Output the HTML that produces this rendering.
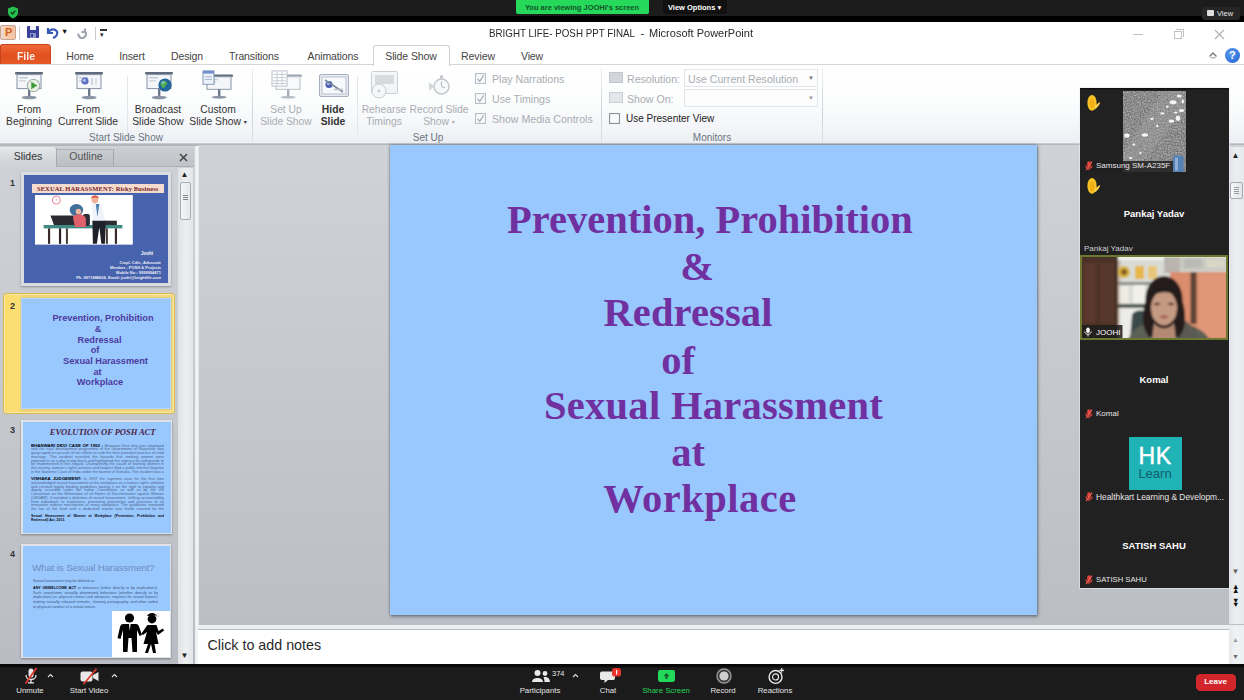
<!DOCTYPE html>
<html lang="en">
<head>
<meta charset="utf-8">
<title>Zoom - PowerPoint share</title>
<style>
*{box-sizing:border-box;margin:0;padding:0}
html,body{width:1244px;height:700px;overflow:hidden;background:#000}
body{position:relative;font-family:"Liberation Sans","DejaVu Sans",sans-serif;font-size:11px;color:#333}
.abs,.abs *{position:absolute}
#root{position:absolute;left:0;top:0;width:1244px;height:700px;overflow:hidden;background:#000}
#stage{left:0;top:0;width:1244px;height:700px;overflow:visible}
#root div,#root span,#root svg{position:absolute}
.t{white-space:nowrap;line-height:1}
.c{transform:translateX(-50%);text-align:center}
/* zoom top */
#ztop{left:0;top:0;width:1244px;height:16px;background:#1c1c1c}
#zgreen{left:516px;top:0;width:133px;height:14px;background:#26d95b;border-radius:0 0 2px 2px}
/* ppt */
#ppt{left:0;top:22px;width:1244px;height:642px;background:#fff}
#ribbon{left:0;top:44px;width:1244px;height:77px;background:linear-gradient(#fff,#fcfdfd 45%,#f3f5f8 80%,#eceff3)}
.tab{top:29px;font-size:10.5px;color:#444;letter-spacing:-.1px}
.rl{font-size:10.3px;color:#333;text-align:center;line-height:11.5px;white-space:nowrap;transform:translateX(-50%)}
.dis{color:#a9adb3}
.grp{font-size:10px;color:#6c7480;top:109px;transform:translateX(-50%);white-space:nowrap}
.sep{top:48px;width:1px;height:70px;background:#d9dde2}
/* left panel */
#left{left:0;top:124px;width:194.500px;height:518px;background:linear-gradient(#cfd2d6,#c6c9cd 45%,#b9bdc3)}
/* edit area */
#edit{left:198px;top:123px;width:1046px;height:480px;background:linear-gradient(#cfd3d7,#c6cace 45%,#bbbfc5)}
#slide{left:390px;top:123px;width:647px;height:470px;background:#99c8fe;box-shadow:0 0 2.500px rgba(70,75,88,.75),1px 2px 3px rgba(60,70,80,.45)}
.st{font-family:"Liberation Serif","DejaVu Serif",serif;font-weight:bold;color:#70309f;font-size:40.5px;white-space:nowrap;line-height:1;transform:translateX(-50%)}
#notes{left:198px;top:603px;width:1046px;height:39px;background:#fff;border-top:4px solid #eceef1;box-shadow:inset 0 1px 0 #b9bdc3}
/* zoom panel */
#zp{left:1080px;top:88px;width:149px;height:500px;background:#212121;box-shadow:0 0 0 1px rgba(235,238,242,.55),inset 0 1.500px 0 #101010}
.zn{color:#e6e6e6;font-size:8px;white-space:nowrap;line-height:1}
.zb{color:#fff;font-weight:bold;font-size:9.500px;white-space:nowrap;line-height:1;transform:translateX(-50%)}
/* bottom */
#zbot{left:0;top:664px;width:1244px;height:36px;background:#1b1b1b}
.bl{color:#e4e4e4;font-size:7.800px;white-space:nowrap;line-height:1;transform:translateX(-50%);top:22.500px}
</style>
</head>
<body>
<div id="root"><div id="stage">
<!-- ZOOM TOP -->
<div id="ztop"></div>
<div id="zgreen"><span class="t c" style="left:66px;top:3.700px;font-size:7.500px;font-weight:bold;color:#14532a">You are viewing JOOHI's screen</span></div>
<div style="left:663px;top:0;width:64px;height:14px;background:#111;border-radius:0 0 3px 3px"></div><span class="t" style="left:668px;top:3.700px;font-size:7.500px;font-weight:bold;color:#fff">View Options ▾</span>
<div style="left:1202px;top:7px;width:38px;height:13px;background:#262626;border-radius:3px"></div><span class="t" style="left:1217px;top:9.500px;font-size:7.500px;color:#e6e6e6">View</span>
<div style="left:1207px;top:10px;width:7px;height:6px;background:#ddd;border-radius:1px"></div>
<svg style="left:7px;top:6px" width="12" height="13" viewBox="0 0 12 13"><path d="M6 .5 L11 2.5 V6.5 C11 9.5 8.5 11.5 6 12.5 C3.5 11.5 1 9.5 1 6.5 V2.5Z" fill="#25c04f"/><path d="M3.8 6.3 L5.4 8 L8.3 4.8" stroke="#0d3b1a" stroke-width="1.3" fill="none"/></svg>

<!-- POWERPOINT WINDOW -->
<div id="ppt">
  <!-- title bar -->
  <span class="t" style="left:488.700px;top:5.500px;font-size:11.500px;color:#2a2a2a;transform-origin:0 50%;transform:scaleX(.8516)">BRIGHT LIFE- POSH PPT FINAL</span><span class="t" style="left:640.500px;top:5.500px;font-size:11.500px;color:#2a2a2a">-</span><span class="t" style="left:649.400px;top:5.500px;font-size:11.500px;color:#2a2a2a;transform-origin:0 50%;transform:scaleX(.9566)">Microsoft PowerPoint</span>
  <!-- QAT -->
  <div id="qat" style="left:0;top:0;width:120px;height:22px">
    <div style="left:0;top:3px;width:15.500px;height:15px;background:linear-gradient(90deg,#e9d9d2,#f8cdb0 35%,#f6c3a0);border:1px solid #c9a392;border-radius:2px"><span class="t" style="left:4px;top:1px;font-size:11px;font-weight:bold;color:#d2601c">P</span></div>
    <div style="left:19px;top:4px;width:1px;height:14px;background:#c8ccd2"></div>
    <div style="left:26.500px;top:3.700px;width:12.500px;height:12.300px;background:#3a3f9c;border-radius:1px"><div style="left:3px;top:0;width:6.500px;height:4.500px;background:#eef0f8"></div><div style="left:3px;top:7.500px;width:6.500px;height:4.800px;background:#8c92cc"></div><div style="left:4px;top:8.500px;width:2px;height:3px;background:#3a3f9c"></div></div>
    <svg style="left:46px;top:4px" width="14" height="14" viewBox="0 0 14 14"><path d="M2 2 V7 H7 M2.5 6.5 C4 3 9 2 11 5.5 C12 8 10.5 11 7 12" stroke="#3a58b8" stroke-width="2.2" fill="none"/></svg>
    <span class="t" style="left:62.500px;top:4.500px;font-size:8.500px;color:#111">▾</span>
    <svg style="left:76px;top:5px" width="13" height="13" viewBox="0 0 13 13"><path d="M9 1.5 V5 H5.5 M9 4.5 C10.5 6 10.5 9.5 7.5 10.8 C4.5 11.8 2 9.5 2.3 6.5" stroke="#9da2ad" stroke-width="2.100" fill="none"/></svg>
    <div style="left:95px;top:5px;width:1px;height:13px;background:#c8ccd2"></div>
    <div style="left:100px;top:7px;width:7px;height:1.5px;background:#333"></div>
    <span class="t" style="left:100px;top:9px;font-size:7px;color:#222">▾</span>
  </div>
  <!-- window controls -->
  <div style="left:1133px;top:12px;width:10px;height:1px;background:#c4c4c4"></div>
  <div style="left:1174px;top:9px;width:8px;height:8px;border:1px solid #c2c2c2"></div>
  <div style="left:1176px;top:7px;width:8px;height:8px;border-top:1px solid #c2c2c2;border-right:1px solid #c2c2c2"></div>
  <svg style="left:1214px;top:7px" width="11" height="11" viewBox="0 0 11 11"><path d="M1 1 L10 10 M10 1 L1 10" stroke="#b0b0b0" stroke-width="1.1"/></svg>
  <svg style="left:1208px;top:28px" width="10" height="10" viewBox="0 0 10 10"><path d="M1.5 6.5 L5 3 L8.5 6.5" stroke="#777" stroke-width="1.3" fill="none"/><path d="M2.5 7.8 H7.5" stroke="#999" stroke-width="1"/></svg>
  <div style="left:1225px;top:26px;width:15px;height:15px;border-radius:50%;background:radial-gradient(circle at 40% 35%,#5b9cf0,#1f5fd0)"><span class="t" style="left:4px;top:2px;font-size:11px;font-weight:bold;color:#fff">?</span></div>

  <!-- tabs -->
  <div style="left:0;top:22px;width:51px;height:21px;background:linear-gradient(#f0693a,#e1501f 55%,#e65a26);border-radius:2px 3px 0 0;border:1px solid #c8441a"><span class="t c" style="left:25px;top:5.800px;font-size:10.500px;color:#fff;font-weight:bold;opacity:.9">File</span></div>
  <span class="t tab c" style="left:80px">Home</span>
  <span class="t tab c" style="left:132px">Insert</span>
  <span class="t tab c" style="left:187px">Design</span>
  <span class="t tab c" style="left:254px">Transitions</span>
  <span class="t tab c" style="left:333px">Animations</span>
  <div style="left:373px;top:23px;width:77px;height:21px;border:1px solid #cdd1d6;border-bottom:none;border-radius:3px 3px 0 0;background:#fff;z-index:3"></div>
  <span class="t tab c" style="left:411px;z-index:4">Slide Show</span>
  <span class="t tab c" style="left:478px">Review</span>
  <span class="t tab c" style="left:532px">View</span>
  <div style="left:0;top:42.300px;width:1244px;height:1px;background:#d3d6da"></div>

  <!-- ribbon -->
  <div id="ribbon">
<svg style="left:14px;top:6px;opacity:1" width="30" height="28" viewBox="0 0 30 28">
<rect x="1" y="0" width="28" height="2.6" rx="1" fill="#5d6b7d"/>
<rect x="3" y="2.6" width="24" height="14" fill="#f4f6f9" stroke="#8492a4" stroke-width="1"/>
<rect x="5" y="5" width="9" height="1.5" fill="#c3cbd6"/><rect x="5" y="8" width="7" height="1.5" fill="#d3d9e2"/>
<rect x="14" y="16.6" width="2.4" height="8" fill="#6b7889"/>
<ellipse cx="15.2" cy="25.5" rx="7.5" ry="1.7" fill="#8a96a6"/>
<circle cx="19.5" cy="13.5" r="6.2" fill="#e6efe2" stroke="#9aa9a0" stroke-width="1"/><path d="M17.3 9.8 L23.2 13.5 L17.3 17.2Z" fill="#3e9a36"/></svg>
<svg style="left:74px;top:6px;opacity:1" width="30" height="28" viewBox="0 0 30 28">
<rect x="1" y="0" width="28" height="2.6" rx="1" fill="#5d6b7d"/>
<rect x="3" y="2.6" width="24" height="14" fill="#f4f6f9" stroke="#8492a4" stroke-width="1"/>
<rect x="5" y="5" width="9" height="1.5" fill="#c3cbd6"/><rect x="5" y="8" width="7" height="1.5" fill="#d3d9e2"/>
<rect x="14" y="16.6" width="2.4" height="8" fill="#6b7889"/>
<ellipse cx="15.2" cy="25.5" rx="7.5" ry="1.7" fill="#8a96a6"/>
<circle cx="11" cy="9" r="3.6" fill="#5b6fc4"/><circle cx="10.3" cy="8.3" r="1.5" fill="#b9c4ee"/><rect x="17" y="6" width="2" height="7" fill="#cfd6e0"/><rect x="21" y="6" width="2" height="7" fill="#dde2ea"/></svg>
<svg style="left:144px;top:6px;opacity:1" width="30" height="28" viewBox="0 0 30 28">
<rect x="1" y="0" width="28" height="2.6" rx="1" fill="#5d6b7d"/>
<rect x="3" y="2.6" width="24" height="14" fill="#f4f6f9" stroke="#8492a4" stroke-width="1"/>
<rect x="5" y="5" width="9" height="1.5" fill="#c3cbd6"/><rect x="5" y="8" width="7" height="1.5" fill="#d3d9e2"/>
<rect x="14" y="16.6" width="2.4" height="8" fill="#6b7889"/>
<ellipse cx="15.2" cy="25.5" rx="7.5" ry="1.7" fill="#8a96a6"/>
<circle cx="21" cy="13" r="6.600" fill="#22649c"/><path d="M17 10 C19 8 22 8.5 23 10.5 C24 12.5 22 13 21 15 C20 17 18.5 16 17.5 14.5 C16.5 13 16 11.5 17 10Z" fill="#4fae55"/><circle cx="19" cy="10.5" r="1.6" fill="#9cc6f2" opacity=".7"/></svg>
<svg style="left:202px;top:4px;opacity:1" width="32" height="29.500" preserveAspectRatio="none"  viewBox="-2 -5 32 33" >
<rect x="1" y="0" width="28" height="2.6" rx="1" fill="#5d6b7d"/>
<rect x="3" y="2.6" width="24" height="14" fill="#f4f6f9" stroke="#8492a4" stroke-width="1"/>
<rect x="5" y="5" width="9" height="1.5" fill="#c3cbd6"/><rect x="5" y="8" width="7" height="1.5" fill="#d3d9e2"/>
<rect x="14" y="16.6" width="2.4" height="8" fill="#6b7889"/>
<ellipse cx="15.2" cy="25.5" rx="7.5" ry="1.7" fill="#8a96a6"/>
<rect x="-1" y="-4" width="11" height="15" fill="#eef2f8" stroke="#7f93b3" stroke-width="1"/><rect x="-1" y="-4" width="11" height="3" fill="#6f8fcf"/><rect x="1" y="2" width="7" height="1.2" fill="#a8b6cf"/><rect x="1" y="5" width="7" height="1.2" fill="#a8b6cf"/></svg>
<svg style="left:271px;top:4px;opacity:.6" width="32" height="29.500" preserveAspectRatio="none"  viewBox="-2 -5 32 33" >
<rect x="1" y="0" width="28" height="2.6" rx="1" fill="#5d6b7d"/>
<rect x="3" y="2.6" width="24" height="14" fill="#f4f6f9" stroke="#8492a4" stroke-width="1"/>
<rect x="5" y="5" width="9" height="1.5" fill="#c3cbd6"/><rect x="5" y="8" width="7" height="1.5" fill="#d3d9e2"/>
<rect x="14" y="16.6" width="2.4" height="8" fill="#6b7889"/>
<ellipse cx="15.2" cy="25.5" rx="7.5" ry="1.7" fill="#8a96a6"/>
<rect x="-1" y="-4" width="15" height="17" fill="#fff" stroke="#8791a3" stroke-width="1"/><path d="M0 0 H13 M0 3.500 H13 M0 7 H13 M0 10 H13 M4 -3 V12 M9 -3 V12" stroke="#8c95a6" stroke-width=".8"/></svg>
<svg style="left:319px;top:8px" width="30" height="24" viewBox="0 0 30 24">
<rect x=".5" y=".5" width="29" height="22" rx="1.500" fill="#e8ecf2" stroke="#a7b0be"/>
<rect x="3" y="3" width="24" height="17" fill="#f7f9fc" stroke="#aab4c3" stroke-width=".8"/>
<circle cx="10" cy="10.5" r="3.6" fill="#4a5fb5"/><circle cx="9.3" cy="9.8" r="1.4" fill="#b5c0ec"/>
<path d="M6 6 L24 18" stroke="#7c8aa0" stroke-width="1.6"/><path d="M15 15.5 H24" stroke="#b4bdca" stroke-width="1.5"/>
</svg>
<svg style="left:370px;top:5px;opacity:.55" width="30" height="30" viewBox="0 0 30 30">
<rect x="1.5" y=".5" width="26" height="22" rx="1" fill="#eceef1" stroke="#a3a9b2"/>
<rect x="5" y="4" width="19" height="9" fill="#b9bec6"/>
<circle cx="9" cy="20" r="7" fill="#f1f2f4" stroke="#9ea4ad"/><circle cx="9" cy="20" r="1.3" fill="#8e949d"/>
</svg>
<svg style="left:427px;top:7px;opacity:.6" width="26" height="26" viewBox="0 0 26 26">
<circle cx="14.5" cy="13.5" r="7.5" fill="#f6f7f8" stroke="#9aa0a9" stroke-width="1.4"/>
<path d="M14.5 13.5 V8.5 M14.5 13.5 L18 15" stroke="#8d939c" stroke-width="1.2"/>
<rect x="13" y="2.5" width="3" height="3" fill="#9aa0a9"/>
<path d="M2 9.5 L8 13.5 L2 17.5Z" fill="#b9bec6"/>
</svg>
<span class="rl " style="left:29px;top:38px;">From</span><span class="rl " style="left:29px;top:49.5px;">Beginning</span>
<span class="rl " style="left:88px;top:38px;">From</span><span class="rl " style="left:88px;top:49.5px;">Current Slide</span>
<span class="rl " style="left:158px;top:38px;">Broadcast</span><span class="rl " style="left:158px;top:49.5px;">Slide Show</span>
<span class="rl " style="left:218px;top:38px;">Custom</span><span class="rl " style="left:218px;top:49.5px;">Slide Show <span style="position:static;font-size:6px;vertical-align:1px">▾</span></span>
<span class="rl dis" style="left:286px;top:38px;">Set Up</span><span class="rl dis" style="left:286px;top:49.5px;">Slide Show</span>
<span class="rl " style="left:333px;top:38px;font-weight:bold;">Hide</span><span class="rl " style="left:333px;top:49.5px;font-weight:bold;">Slide</span>
<span class="rl dis" style="left:384px;top:38px;">Rehearse</span><span class="rl dis" style="left:384px;top:49.5px;">Timings</span>
<span class="rl dis" style="left:439px;top:38px;">Record Slide</span><span class="rl dis" style="left:439px;top:49.5px;">Show <span style="position:static;font-size:6px;vertical-align:1px">▾</span></span>
<div class="sep" style="left:127px;top:10px;height:58px;background:#e3e6ea"></div>
<div class="sep" style="left:357px;top:10px;height:58px;background:#e3e6ea"></div>
<div class="sep" style="left:252px;top:2px;height:74px;background:linear-gradient(#eceff2,#cdd2d9 60%,#dfe3e8)"></div>
<div class="sep" style="left:601px;top:2px;height:74px;background:linear-gradient(#eceff2,#cdd2d9 60%,#dfe3e8)"></div>
<div class="sep" style="left:822px;top:2px;height:74px;background:linear-gradient(#eceff2,#cdd2d9 60%,#dfe3e8)"></div>
<span class="grp" style="left:126px;top:66px">Start Slide Show</span>
<span class="grp" style="left:428px;top:66px">Set Up</span>
<span class="grp" style="left:712px;top:66px">Monitors</span>
<svg style="left:475px;top:7px" width="11" height="11" viewBox="0 0 10 10"><rect x=".5" y=".5" width="9" height="9" fill="#fafbfc" stroke="#b9bec6"/><path d="M2.3 5.2 L4.3 7.6 L7.8 2.2" stroke="#aab0b9" stroke-width="1.2" fill="none"/></svg>
<span class="t dis" style="left:492px;top:7.5px;font-size:10.6px">Play Narrations</span>
<svg style="left:475px;top:27px" width="11" height="11" viewBox="0 0 10 10"><rect x=".5" y=".5" width="9" height="9" fill="#fafbfc" stroke="#b9bec6"/><path d="M2.3 5.2 L4.3 7.6 L7.8 2.2" stroke="#aab0b9" stroke-width="1.2" fill="none"/></svg>
<span class="t dis" style="left:492px;top:27.5px;font-size:10.6px">Use Timings</span>
<svg style="left:475px;top:47px" width="11" height="11" viewBox="0 0 10 10"><rect x=".5" y=".5" width="9" height="9" fill="#fafbfc" stroke="#b9bec6"/><path d="M2.3 5.2 L4.3 7.6 L7.8 2.2" stroke="#aab0b9" stroke-width="1.2" fill="none"/></svg>
<span class="t dis" style="left:492px;top:47.5px;font-size:10.6px">Show Media Controls</span>
<div style="left:609px;top:6px;width:14px;height:11px;background:#c9cdd3;border:1px solid #b4b9c1;opacity:.8"></div>
<div style="left:609px;top:26px;width:14px;height:11px;background:#dfe2e6;border:1px solid #bcc1c8;opacity:.8"></div>
<span class="t dis" style="left:627px;top:7.5px;font-size:10.6px">Resolution:</span>
<span class="t dis" style="left:627px;top:27.5px;font-size:10.6px">Show On:</span>
<div style="left:684px;top:3px;width:134px;height:18px;border:1px solid #e3e6ea;background:#fdfdfe"></div>
<div style="left:684px;top:23px;width:134px;height:18px;border:1px solid #e3e6ea;background:#fdfdfe"></div>
<span class="t dis" style="left:688px;top:7.5px;font-size:10.6px">Use Current Resolution</span>
<span class="t" style="left:808px;top:9px;font-size:6px;color:#777">▼</span>
<span class="t" style="left:808px;top:29px;font-size:6px;color:#999">▼</span>
<svg style="left:609px;top:47px" width="11" height="11" viewBox="0 0 10 10"><rect x=".5" y=".5" width="9" height="9" fill="#fafbfc" stroke="#8a919c"/></svg>
<span class="t" style="left:626px;top:47.5px;font-size:10px;color:#222">Use Presenter View</span>
  </div>
  <div style="left:0;top:120.5px;width:1244px;height:4.5px;background:linear-gradient(#d4d7db,#b4b8bd 30%,#b1b5ba)"></div>

  <!-- LEFT PANEL -->
  <div id="left">
<div style="left:0;top:2px;width:194px;height:19px;background:linear-gradient(#cbced2,#bfc2c7);border-bottom:1px solid #aeb2b8"></div>
<div style="left:0;top:1px;width:57px;height:20px;background:linear-gradient(#e6e8ea,#d3d6da 70%,#cfd2d6);border-right:1px solid #a6abb2;border-radius:0 3px 0 0"></div>
<div style="left:57px;top:3px;width:57px;height:17px;background:linear-gradient(#c9ccd0,#bbbec3);border-right:1px solid #a3a7ae;border-top:1px solid #b0b4ba"></div>
<span class="t c" style="left:28px;top:5px;font-size:10.5px;color:#333">Slides</span>
<span class="t c" style="left:86px;top:5px;font-size:10.5px;color:#555">Outline</span>
<svg style="left:179px;top:7px" width="9" height="9" viewBox="0 0 9 9"><path d="M1 1 L8 8 M8 1 L1 8" stroke="#444" stroke-width="1.5"/></svg>
<div style="left:178px;top:22px;width:15px;height:496px;background:linear-gradient(90deg,#dfe1e4,#eceef0 50%,#e2e4e7)"></div>
<span class="t" style="left:180.500px;top:24.5px;font-size:8px;color:#222">▲</span>
<span class="t" style="left:180.500px;top:506px;font-size:8px;color:#222">▼</span>
<div style="left:180px;top:36px;width:11px;height:38px;background:linear-gradient(90deg,#f4f5f6,#e4e6e9);border:1px solid #a9aeb5;border-radius:2px"><div style="left:2px;top:12px;width:5px;height:1px;background:#888;box-shadow:0 2px 0 #888,0 4px 0 #888"></div></div>
<span class="t" style="left:10px;top:33px;font-size:9px;font-weight:bold;color:#333;z-index:5">1</span>
<span class="t" style="left:10px;top:156px;font-size:9px;font-weight:bold;color:#333;z-index:5">2</span>
<span class="t" style="left:10px;top:280px;font-size:9px;font-weight:bold;color:#333;z-index:5">3</span>
<span class="t" style="left:10px;top:404px;font-size:9px;font-weight:bold;color:#333;z-index:5">4</span>
<div style="left:20.500px;top:26.30000000000001px;width:150.500px;height:113.500px;background:#d9dce1;box-shadow:0 1px 2px rgba(0,0,0,.3)">
<div style="left:3.300px;top:2.500px;width:144px;height:108.500px;background:#4863ad"></div>
<div style="left:11.200px;top:11.600px;width:132px;height:9.600px;background:#f3dccf"><span class="t c" style="left:66px;top:1.800px;font-family:'Liberation Serif',serif;font-weight:bold;font-size:6.500px;color:#7a1f1f;letter-spacing:.1px">SEXUAL HARASSMENT: Risky Business</span></div>
<svg style="left:14.900px;top:22.700px" width="97.800" height="49.700" viewBox="0 0 98 49.700">
<rect width="98" height="49.700" fill="#fff"/>
<circle cx="21.400" cy="5.100" r="4" fill="none" stroke="#e0667a" stroke-width=".8"/>
<path d="M21.400 3 V5.100 H23" stroke="#e08a96" stroke-width=".5" fill="none"/>
<rect x="8.600" y="30" width="79" height="3.400" fill="#3f8a82"/>
<rect x="13" y="33.400" width="2.200" height="15.500" fill="#3a2a2a"/><rect x="24" y="33.400" width="2.200" height="15.500" fill="#2a2226"/><rect x="31" y="33.400" width="2" height="15.500" fill="#4a3a34"/><rect x="71" y="33.400" width="2" height="15.500" fill="#4a3a34"/><rect x="80" y="33.400" width="2.200" height="15.500" fill="#3a2a2a"/>
<path d="M15.500 20.600 H39 L41.500 30 H19Z" fill="#2a2a30"/>
<rect x="48" y="19" width="7" height="12" rx="2" fill="#2e2e36"/>
<ellipse cx="41.500" cy="15" rx="6.800" ry="6" fill="#3f6f9a"/>
<path d="M38 22 C40 18 50 18 51 24 V32 H40Z" fill="#e0606c"/><circle cx="43.500" cy="16.500" r="2.800" fill="#f1b9a0"/>
<ellipse cx="60" cy="4.500" rx="3.400" ry="4" fill="#f1b098"/><path d="M56 3.500 C57 -.5 63.500 -.5 64 3.500 C62 2 58 2 56 3.500Z" fill="#d8503e"/>
<path d="M57 9 H67 L70 26 H58Z" fill="#f0f3f9"/><path d="M61 9 L62.500 22 L64.500 9Z" fill="#4b7fb0"/>
<path d="M57.500 25.700 H71 L70 48.900 H66.500 L64.500 32 L62 48.900 H58Z" fill="#20202a"/>
<rect x="70" y="25.700" width="12" height="4.300" fill="#2c2c33"/>
</svg>
<span class="t" style="right:18px;top:80px;font-size:4.500px;font-weight:bold;color:#fff">Joohi</span>
<span class="t" style="right:10px;top:88.300px;font-size:4px;font-weight:bold;color:#e8ecf8">Cmpl. Cdtr., Advocate</span>
<span class="t" style="right:10px;top:94px;font-size:4px;font-weight:bold;color:#e8ecf8">Member - POSH &amp; Projects</span>
<span class="t" style="right:10px;top:98.700px;font-size:4px;font-weight:bold;color:#e8ecf8">Mobile No.: 9999994471</span>
<span class="t" style="right:10px;top:103.900px;font-size:4px;font-weight:bold;color:#e8ecf8">Ph. 9971888624, Email: joohi@brightlife.com</span>
</div>
<div style="left:2.600px;top:146.89999999999998px;width:172.400px;height:121.200px;border-radius:3px;background:linear-gradient(90deg,#fbdc6c,#fbdf76 9%,#efd675 11%,#f1da80);border:1.300px solid #d9b84e;box-shadow:inset 0 0 0 1px #f7e7a8">
<div style="left:17.500px;top:4.400px;width:149.500px;height:110.500px;background:#99c8fe;box-shadow:0 0 0 1px #e3cd7c,inset 0 0 0 1px rgba(200,225,255,.6)"></div>
</div>
<span class="t c" style="left:103px;top:168.2px;font-size:9.2px;font-weight:bold;color:#4d3aa0">Prevention, Prohibition</span>
<span class="t c" style="left:98px;top:178.89999999999998px;font-size:9.2px;font-weight:bold;color:#4d3aa0">&amp;</span>
<span class="t c" style="left:99.5px;top:189.5px;font-size:9.2px;font-weight:bold;color:#4d3aa0">Redressal</span>
<span class="t c" style="left:95px;top:200.2px;font-size:9.2px;font-weight:bold;color:#4d3aa0">of</span>
<span class="t c" style="left:105.5px;top:210.8px;font-size:9.2px;font-weight:bold;color:#4d3aa0">Sexual Harassment</span>
<span class="t c" style="left:97.5px;top:221.5px;font-size:9.2px;font-weight:bold;color:#4d3aa0">at</span>
<span class="t c" style="left:100px;top:232.10000000000002px;font-size:9.2px;font-weight:bold;color:#4d3aa0">Workplace</span>
<div style="left:21px;top:274px;width:151px;height:114px;background:#dfe3e8;box-shadow:0 1px 2px rgba(0,0,0,.35)">
<div style="left:1.5px;top:1.5px;width:148px;height:111px;background:#99c8fe"></div>
<span class="t c" style="left:81.600px;top:8px;font-family:'Liberation Serif',serif;font-weight:bold;font-style:italic;font-size:8.600px;color:#4d2348;letter-spacing:-.1px">EVOLUTION OF POSH ACT</span>
<div style="left:10px;top:22.500px;width:133px;height:30.400px;padding-top:1px;font-size:3.800px;line-height:3.750px;color:#4d6186;text-align:justify;overflow:hidden"><b style="color:#000;font-size:4.400px">BHANWARI DEVI CASE OF 1992 :</b> Bhanwari Devi who was employed with the rural development programme of the Government of Rajasthan was gang raped on account of her efforts to curb the then prevalent practice of child marriage. This incident revealed the hazards that working women were exposed to on a day to day basis and highlighted the urgency for safeguards to be implemented in this regard. Championing the cause of working women in the country, women's rights activists and lawyers filed a public interest litigation in the Supreme Court of India under the banner of Vishaka. This incident was a landmark for the women's movement in India and formed the basis of the later guidelines.</div>
<div style="left:10px;top:56px;width:133px;height:34.100px;padding-top:1px;font-size:3.800px;line-height:3.750px;color:#4d6186;text-align:justify;overflow:hidden"><b style="color:#000;font-size:4.400px">VISHAKA JUDGEMENT:</b> In 1997 the supreme court for the first time acknowledged sexual harassment at the workplace as a human rights violation and created legally binding guidelines basing it on the right to equality and dignity accorded under the Indian Constitution as well as by the UN Convention on the Elimination of all Forms of Discrimination against Women (CEDAW). It included a definition of sexual harassment, shifting accountability from individuals to institutions, prioritizing prevention and provision of an innovative redress mechanism at every workplace. The guidelines remained the law of the land until a dedicated statute was finally enacted by the Parliament in 2013 to replace them.</div>
<div style="left:10px;top:94px;width:133px;height:9px;font-size:3.4px;line-height:4.2px;color:#0a0a14;font-weight:bold;text-align:justify;overflow:hidden">Sexual Harassment of Women at Workplace (Prevention, Prohibition and Redressal) Act, 2013.</div>
</div>
<div style="left:21px;top:398px;width:150px;height:114px;background:#dfe3e8;box-shadow:0 1px 2px rgba(0,0,0,.35)">
<div style="left:1.5px;top:1.5px;width:147px;height:111px;background:#99c8fe"></div>
<span class="t" style="left:11px;top:19px;font-size:9.800px;color:#6f8cc0;letter-spacing:-.15px">What is Sexual Harassment?</span>
<span class="t" style="left:12px;top:35.5px;font-size:3.6px;color:#3d5580">Sexual harassment may be defined as: -</span>
<div style="left:12px;top:42px;width:125px;height:24px;font-size:3.7px;line-height:4.7px;color:#3d5580;text-align:justify;overflow:hidden"><b style="color:#0a0a14">ANY UNWELCOME ACT</b> or behaviour (either directly or by implications): Such unwelcome sexually determined behaviour (whether directly or by implication) as: physical contact and advances; requests for sexual favours; making sexually coloured remarks; showing pornography; and other verbal or physical conduct of a sexual nature.</div>
<svg style="left:90.5px;top:67px" width="58" height="46" viewBox="0 0 58 46">
<rect width="58" height="46" fill="#fff"/>
<circle cx="17.5" cy="7" r="4.6" fill="#000"/>
<path d="M11 13 H24 C26 13 27 15 27.5 17 L30 24 L27.5 25 L25 19 V41 H20.5 L19.5 27 H16.5 L15.500 41 H11 V19 L8.500 28 L5.500 27 L8 16 C8.500 14 9.500 13 11 13Z" fill="#000"/>
<path d="M17 13 L17.800 20 L18.600 13Z" fill="#fff"/>
<circle cx="40" cy="8" r="4.400" fill="#000"/><path d="M35 5 C37 1 44 1 45.500 6 L44 4.500Z" fill="#000"/>
<circle cx="45.500" cy="4.500" r="1.700" fill="none" stroke="#bbb" stroke-width=".5"/>
<path d="M35.500 14 H44.500 L46.500 20 L51 17.500 L52 19.500 L46 24 L44 21 L46.500 33 H42.500 L44 42 H41 L39 33 L36 42 H33 L36 33 H31.500 L35 21 L31 24 L29.500 22.500 L34 16Z" fill="#000"/>
</svg>
</div>
</div>

  <!-- EDIT AREA -->
  <div id="edit"></div>
  <div style="left:195px;top:124px;width:4px;height:518px;background:linear-gradient(90deg,#e8eaed,#f6f7f8,#dfe2e6)"></div>
  <div id="slide">
    <span class="st" style="left:320px;top:55px">Prevention, Prohibition</span>
    <span class="st" style="left:307px;top:102px">&amp;</span>
    <span class="st" style="left:298px;top:148px;letter-spacing:.12px">Redressal</span>
    <span class="st" style="left:288px;top:195.5px">of</span>
    <span class="st" style="left:323.5px;top:241px;letter-spacing:.3px">Sexual Harassment</span>
    <span class="st" style="left:298px;top:288px">at</span>
    <span class="st" style="left:310px;top:334px;letter-spacing:.5px">Workplace</span>
  </div>

  <!-- right scrollbars -->
  <div style="left:1229px;top:125px;width:15px;height:477px;background:linear-gradient(90deg,#dfe2e6,#eceef1 45%,#e6e8ec)"></div>
  <span class="t" style="left:1231.500px;top:129.500px;font-size:8px;color:#222">▲</span>
  <div style="left:1230px;top:160px;width:12.500px;height:17px;background:linear-gradient(90deg,#f6f7f8,#e2e5e9);border:1px solid #a4a9b1;border-radius:2px"><div style="left:3px;top:4px;width:5px;height:1px;background:#9a9fa7;box-shadow:0 2px 0 #9a9fa7,0 4px 0 #9a9fa7,0 6px 0 #9a9fa7"></div></div>
  <span class="t" style="left:1231.500px;top:546px;font-size:8px;color:#666">▼</span>
  <span class="t" style="left:1232px;top:560.500px;font-size:7.500px;color:#111">▲</span><span class="t" style="left:1232px;top:565px;font-size:7.500px;color:#111">▲</span>
  <span class="t" style="left:1232px;top:574.500px;font-size:7.500px;color:#111">▼</span><span class="t" style="left:1232px;top:579px;font-size:7.500px;color:#111">▼</span>
  <div style="left:1229px;top:606px;width:15px;height:36px;background:linear-gradient(90deg,#e6e8ec,#f1f2f4 45%,#eceef0);z-index:2"></div>
  <span class="t" style="left:1232px;top:613.500px;font-size:7px;color:#9a9fa7;z-index:3">▲</span>
  <span class="t" style="left:1232px;top:631px;font-size:7px;color:#666b73;z-index:3">▼</span>
  <div id="notes"><span class="t" style="left:9.5px;top:9px;font-size:14.300px;color:#2a2a2a">Click to add notes</span></div>
</div>

<!-- ZOOM PARTICIPANT PANEL -->
<div id="zp">
<svg style="left:5.7999999999999545px;top:5.5px" width="15" height="18.500" viewBox="0 0 14 17"><ellipse cx="5.600" cy="8.200" rx="4.300" ry="7.400" fill="#f6c226"/><ellipse cx="5.600" cy="8.800" rx="2.200" ry="4.500" fill="#f0b015"/><path d="M8 10.500 C10 10 11.500 8 12.800 7.300 C13.600 8.300 12 11.500 8.500 14Z" fill="#f8cf4a"/></svg>
<svg style="left:5.7999999999999545px;top:88.5px" width="15" height="18.500" viewBox="0 0 14 17"><ellipse cx="5.600" cy="8.200" rx="4.300" ry="7.400" fill="#f6c226"/><ellipse cx="5.600" cy="8.800" rx="2.200" ry="4.500" fill="#f0b015"/><path d="M8 10.500 C10 10 11.500 8 12.800 7.300 C13.600 8.300 12 11.500 8.500 14Z" fill="#f8cf4a"/></svg>
<svg style="left:43px;top:2.5px" width="62.500" height="81.500" viewBox="0 0 62.500 81.500">
<filter id="nz2" x="0" y="0" width="100%" height="100%" color-interpolation-filters="sRGB"><feTurbulence type="fractalNoise" baseFrequency=".7" numOctaves="3" seed="11"/><feColorMatrix type="matrix" values=".5 0 0 0 .3  .5 0 0 0 .3  .5 0 0 0 .3  0 0 0 0 1"/><feGaussianBlur stdDeviation=".6"/></filter>
<filter id="sb"><feGaussianBlur stdDeviation=".4"/></filter>
<rect width="62.500" height="81.500" fill="#8e8e8e"/>
<rect width="62.500" height="81.500" filter="url(#nz2)" opacity=".9"/>
<path d="M62.500 0 L40 0 L0 62 V81.500 H10 L62.500 18Z" fill="#a8a8a8" opacity=".3" filter="url(#sb)"/>
<g fill="#f4f4f4" filter="url(#sb)"><ellipse cx="50.1" cy="11.2" rx="3.4" ry="2.0"/><ellipse cx="56.2" cy="5.1" rx="2.4" ry="1.5"/><ellipse cx="58.5" cy="19.5" rx="2.7" ry="1.6"/><ellipse cx="54.9" cy="27.2" rx="2.2" ry="2.7"/><ellipse cx="48.5" cy="30.1" rx="2.9" ry="1.7"/><ellipse cx="39.2" cy="22.4" rx="2.0" ry="1.2"/><ellipse cx="28.9" cy="27.9" rx="1.7" ry="1.1"/><ellipse cx="21.9" cy="44.0" rx="3.2" ry="1.7"/><ellipse cx="3.9" cy="44.6" rx="2.7" ry="2.2"/><ellipse cx="10.9" cy="53.6" rx="1.5" ry="1.1"/><ellipse cx="44.3" cy="15.7" rx="1.5" ry="1.0"/><ellipse cx="34.1" cy="35.0" rx="1.5" ry="1.0"/><ellipse cx="17.4" cy="62.0" rx="1.2" ry="0.9"/><ellipse cx="7.7" cy="67.1" rx="1.7" ry="1.1"/><ellipse cx="59.8" cy="10.5" rx="1.2" ry="2.0"/><ellipse cx="52.7" cy="21.5" rx="1.7" ry="1.1"/></g>
<rect x="50" y="64.500" width="10.500" height="17" rx="2" fill="#5580b4" filter="url(#sb)"/><rect x="52" y="66.500" width="3" height="13" fill="#a9c4e4" opacity=".7" filter="url(#sb)"/>
</svg>
<div style="left:1px;top:72.5px;width:92px;height:11.500px;background:#1f1f1f;opacity:.85"></div>
<svg style="left:5px;top:73px" width="8" height="10" viewBox="0 0 8 10"><rect x="2.200" y=".3" width="3.600" height="5.800" rx="1.800" fill="#e2453c"/><path d="M1 4.500 C1 8 7 8 7 4.500 M4 7.200 V9.300" stroke="#d9433a" stroke-width="1.100" fill="none"/><path d="M7 .6 L1.200 9.200" stroke="#ef5a50" stroke-width="1.200"/></svg>
<span class="zn" style="left:16px;top:74px">Samsung SM-A235F</span>
<span class="zb" style="left:74px;top:121px">Pankaj Yadav</span>
<span class="zn" style="left:4px;top:157.3px;color:#cfcfcf">Pankaj Yadav</span>
<svg style="left:0px;top:167px" width="148" height="85" viewBox="0 0 148 85">
<defs><filter id="bl"><feGaussianBlur stdDeviation="1.100"/></filter><clipPath id="vc"><rect x="2" y="2" width="144" height="81"/></clipPath></defs>
<rect width="148" height="85" fill="#6c7730"/>
<g clip-path="url(#vc)"><g filter="url(#bl)">
<rect x="0" y="0" width="148" height="85" fill="#d9dcd4"/>
<rect x="0" y="0" width="39" height="85" fill="#4c3026"/><rect x="4" y="8" width="12" height="60" fill="#5a392d"/><rect x="20" y="8" width="14" height="60" fill="#59382c"/><rect x="38" y="0" width="3" height="85" fill="#c9b8a8"/>
<rect x="38" y="0" width="110" height="5" fill="#eef0ee"/>
<rect x="84" y="2" width="16" height="16" fill="#b9b5ae"/>
<rect x="100" y="2" width="46" height="14" fill="#c9cbc3"/><rect x="104" y="4" width="18" height="9" fill="#b9bbb4"/><rect x="126" y="4" width="18" height="9" fill="#d8d6c4"/>
<rect x="90" y="17" width="58" height="68" fill="#db8d6d"/><rect x="118" y="19" width="28" height="64" fill="#e09778"/>
<rect x="110.500" y="17" width="6" height="52" fill="#5e4238"/>
<circle cx="44" cy="17" r="6" fill="#d9b23a"/><circle cx="44" cy="17" r="3" fill="#8a5a2a"/>
<rect x="55" y="11" width="9" height="13" fill="#e8b64a"/><rect x="68" y="11" width="9" height="13" fill="#e9c77a"/>
<rect x="38" y="27" width="40" height="3" fill="#8b8f88"/>
<rect x="40" y="31" width="9" height="17" fill="#ecebe4"/><rect x="53" y="30" width="12" height="18" fill="#f1f0ea"/>
<rect x="38" y="49" width="30" height="4" fill="#4f5a52"/>
<rect x="40" y="53" width="26" height="32" fill="#ecece8"/>
<path d="M52 60 C54 54 66 54 68 60 V85 H50Z" fill="#3b4a48"/>
<path d="M48 85 C55 68 72 66 88 68 C104 66 122 72 130 85Z" fill="#5d6054"/>
<path d="M92 64 C100 60 112 66 118 85 H96Z" fill="#5a5a52"/>
<ellipse cx="84" cy="44" rx="18.500" ry="23" fill="#261c1c"/><path d="M66 44 C61 60 62 74 69 82 H99 C106 74 107 60 102 44Z" fill="#261c1c"/>
<ellipse cx="84" cy="53" rx="13" ry="17.500" fill="#c59a82"/>
<path d="M68 44 C70 26 98 26 100 44 C94 35 76 35 68 44Z" fill="#241a1a"/>
<ellipse cx="77" cy="49" rx="3" ry="1.300" fill="#4a3028"/><ellipse cx="91" cy="49" rx="3" ry="1.300" fill="#4a3028"/>
<ellipse cx="84" cy="62" rx="4" ry="1.400" fill="#9a5a50"/>
<path d="M74 68 C78 75 90 75 94 68 L96 85 H72Z" fill="#b48a74"/>
</g>
<rect x="1.500" y="70" width="41" height="13.500" fill="#1d1d1d" opacity=".85"/>
<rect x="6.300" y="72.500" width="3.400" height="5.500" rx="1.700" fill="#fff"/><path d="M4.800 76.500 C4.800 80.200 11.200 80.200 11.200 76.500 M8 79.500 V81.500" stroke="#fff" stroke-width=".9" fill="none"/>
</g>
<text x="16" y="80.300" font-family="Liberation Sans, sans-serif" font-size="8" fill="#fff">JOOHI</text>
</svg>
<span class="zb" style="left:74px;top:287px">Komal</span>
<svg style="left:5px;top:321px" width="8" height="10" viewBox="0 0 8 10"><rect x="2.200" y=".3" width="3.600" height="5.800" rx="1.800" fill="#e2453c"/><path d="M1 4.500 C1 8 7 8 7 4.500 M4 7.200 V9.300" stroke="#d9433a" stroke-width="1.100" fill="none"/><path d="M7 .6 L1.200 9.200" stroke="#ef5a50" stroke-width="1.200"/></svg>
<span class="zn" style="left:16px;top:322px">Komal</span>
<div style="left:48.5px;top:349.3px;width:53px;height:52.500px;background:#1fb3b6"><span class="t c" style="left:26.500px;top:7.500px;font-size:23px;color:#fff;letter-spacing:.5px;-webkit-text-stroke:.45px #fff">HK</span><span class="t c" style="left:26.500px;top:30px;font-size:13px;color:#14606e">Learn</span></div>
<svg style="left:5px;top:404px" width="8" height="10" viewBox="0 0 8 10"><rect x="2.200" y=".3" width="3.600" height="5.800" rx="1.800" fill="#e2453c"/><path d="M1 4.500 C1 8 7 8 7 4.500 M4 7.200 V9.300" stroke="#d9433a" stroke-width="1.100" fill="none"/><path d="M7 .6 L1.200 9.200" stroke="#ef5a50" stroke-width="1.200"/></svg>
<span class="zn" style="left:16px;top:405px;font-size:8.400px">Healthkart Learning &amp; Developm...</span>
<span class="zb" style="left:74px;top:453px">SATISH SAHU</span>
<svg style="left:5px;top:487px" width="8" height="10" viewBox="0 0 8 10"><rect x="2.200" y=".3" width="3.600" height="5.800" rx="1.800" fill="#e2453c"/><path d="M1 4.500 C1 8 7 8 7 4.500 M4 7.200 V9.300" stroke="#d9433a" stroke-width="1.100" fill="none"/><path d="M7 .6 L1.200 9.200" stroke="#ef5a50" stroke-width="1.200"/></svg>
<span class="zn" style="left:16px;top:488px;font-size:7.700px">SATISH SAHU</span>
</div>

<!-- ZOOM BOTTOM -->
<div id="zbot">
<div style="left:0;top:0;width:1244px;height:3.500px;background:linear-gradient(#040404,#0a0a0a 60%,#1b1b1b)"></div>
<svg style="left:22px;top:3px" width="18" height="18" viewBox="0 0 18 18"><rect x="6.500" y="1.500" width="5" height="9" rx="2.500" fill="#e8e8e8"/><path d="M4 8 C4 14 14 14 14 8 M9 12.500 V15.500 M6 15.800 H12" stroke="#e8e8e8" stroke-width="1.300" fill="none"/><path d="M14.500 1 L3.500 16.500" stroke="#e0392e" stroke-width="1.700"/></svg>
<svg style="left:46.5px;top:9px" width="7" height="5" viewBox="0 0 7 5"><path d="M1 4 L3.500 1.500 L6 4" stroke="#ddd" stroke-width="1.100" fill="none"/></svg>
<span class="bl" style="left:30px">Unmute</span>
<svg style="left:79px;top:4px" width="22" height="17" viewBox="0 0 22 17"><rect x="1.500" y="3.500" width="12" height="10" rx="2" fill="#e8e8e8"/><path d="M14 7 L19.500 4 V13 L14 10Z" fill="#e8e8e8"/><path d="M17.500 .8 L4.500 16.200" stroke="#e0392e" stroke-width="1.700"/></svg>
<svg style="left:110.5px;top:9px" width="7" height="5" viewBox="0 0 7 5"><path d="M1 4 L3.500 1.500 L6 4" stroke="#ddd" stroke-width="1.100" fill="none"/></svg>
<span class="bl" style="left:89px">Start Video</span>
<svg style="left:531px;top:5px" width="20" height="14" viewBox="0 0 20 14"><circle cx="6.500" cy="4" r="3" fill="#e8e8e8"/><path d="M1 13 C1 7.500 12 7.500 12 13Z" fill="#e8e8e8"/><circle cx="14" cy="4.500" r="2.400" fill="#e8e8e8"/><path d="M12.500 8.200 C16 7.500 19 9.500 19 13 H13.500 C13.500 11 13.200 9.500 12.500 8.200Z" fill="#e8e8e8"/></svg>
<span class="t" style="left:552px;top:6px;font-size:7.500px;color:#e8e8e8">374</span>
<svg style="left:571.5px;top:9px" width="7" height="5" viewBox="0 0 7 5"><path d="M1 4 L3.500 1.500 L6 4" stroke="#ddd" stroke-width="1.100" fill="none"/></svg>
<span class="bl" style="left:540px">Participants</span>
<svg style="left:599px;top:4px" width="24" height="16" viewBox="0 0 24 16"><path d="M3 3.500 H14 C15.500 3.500 16 4.500 16 5.500 V10 C16 11.500 15 12 14 12 H9 L5.500 15 V12 H3 C1.800 12 1 11.200 1 10 V5.500 C1 4.300 1.800 3.500 3 3.500Z" fill="#e8e8e8"/><rect x="13" y="0" width="9" height="8.500" rx="2.500" fill="#e8352c"/><rect x="17" y="2" width="1.200" height="4.500" fill="#fff"/></svg>
<span class="bl" style="left:608px">Chat</span>
<svg style="left:657.500px;top:6px" width="17" height="12" viewBox="0 0 20 14"><rect width="20" height="14" rx="2.500" fill="#23d95b"/><path d="M10 3.500 L13.500 7.200 H11.200 V10.500 H8.800 V7.200 H6.500Z" fill="#145a2b"/></svg>
<span class="bl" style="left:666px;color:#23d95b">Share Screen</span>
<svg style="left:715px;top:3px" width="18" height="18" viewBox="0 0 18 18"><circle cx="9" cy="9" r="7" fill="#3a3a3a" stroke="#9a9a9a" stroke-width="1.400"/><circle cx="9" cy="9" r="4.600" fill="#cfcfcf"/></svg>
<span class="bl" style="left:723px">Record</span>
<svg style="left:766.500px;top:2.5px" width="19" height="18" viewBox="0 0 20 19"><circle cx="9" cy="10.500" r="6.800" fill="none" stroke="#e8e8e8" stroke-width="1.500"/><circle cx="9" cy="10.500" r="3.200" fill="none" stroke="#e8e8e8" stroke-width="1.200"/><path d="M15.500 1 V6 M13 3.500 H18" stroke="#e8e8e8" stroke-width="1.200"/></svg>
<span class="bl" style="left:775px">Reactions</span>
<div style="left:1195.500px;top:9.700000000000045px;width:40px;height:17.300px;border-radius:4.500px;background:#d3262c"><span class="t c" style="left:20px;top:4.700px;font-size:8px;font-weight:bold;color:#fff">Leave</span></div>
</div>
</div></div>
</body>
</html>
